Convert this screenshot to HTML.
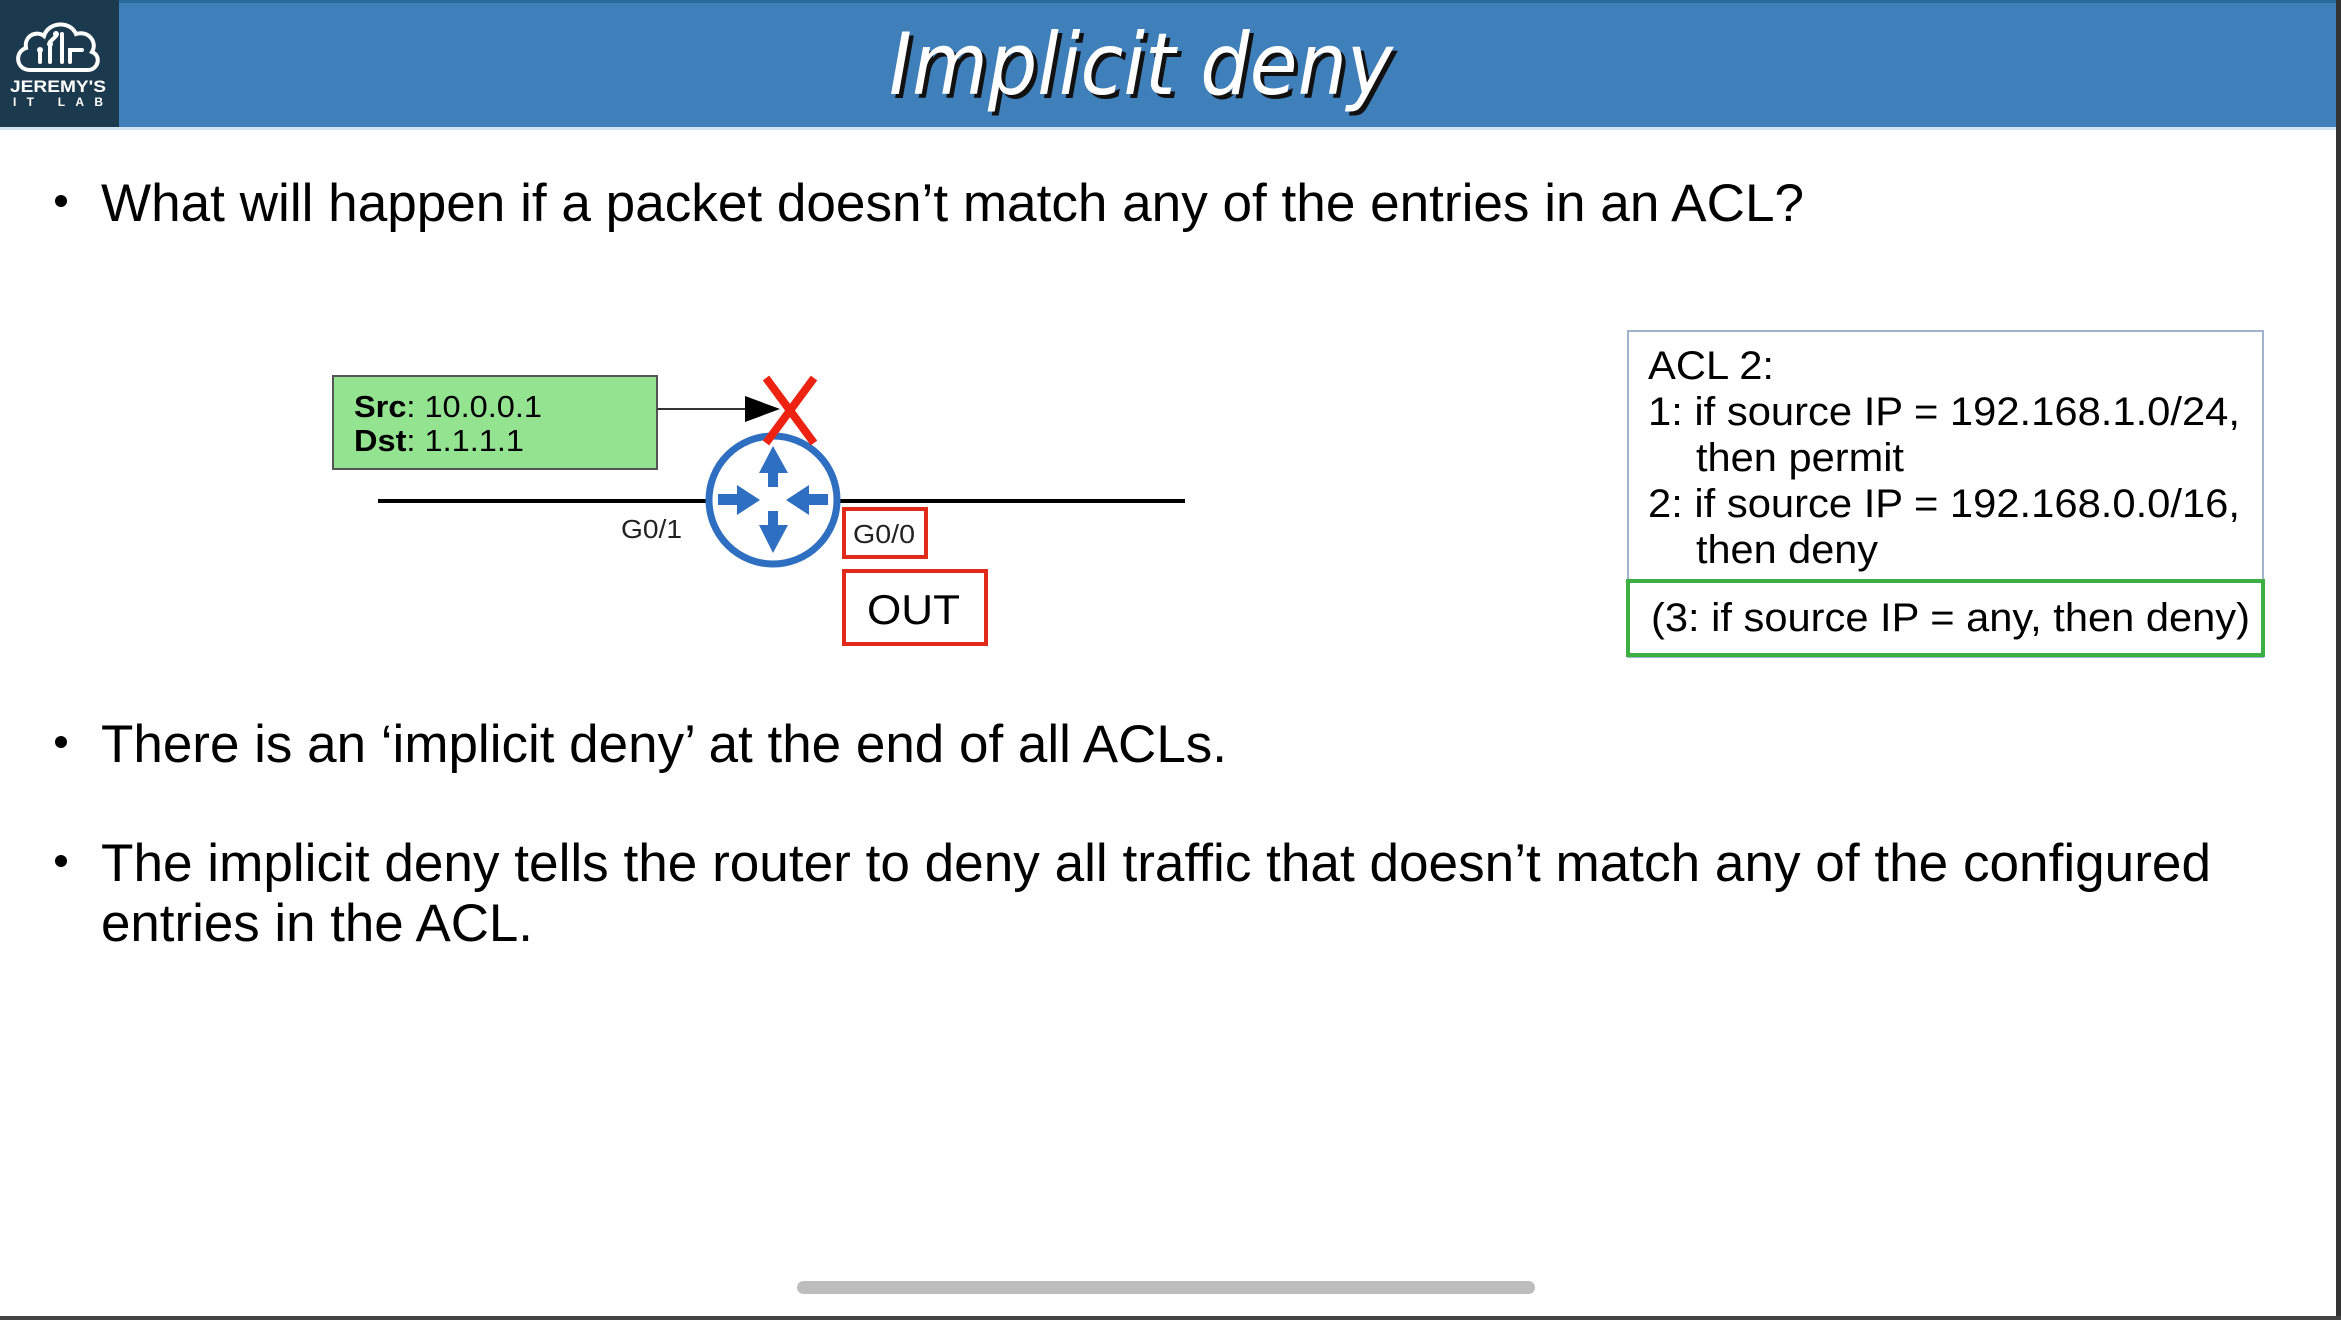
<!DOCTYPE html>
<html><head><meta charset="utf-8"><style>
html,body{margin:0;padding:0;background:#fff;}
svg{display:block;}
text{font-family:"Liberation Sans",sans-serif;}
text.ttl{font-family:"DejaVu Sans ExtraLight","DejaVu Sans",sans-serif;font-weight:200;font-style:italic;}
</style></head><body>
<svg width="2341" height="1320" viewBox="0 0 2341 1320" xmlns="http://www.w3.org/2000/svg">
<rect x="0" y="0" width="2341" height="1320" fill="#fff"/>
<rect x="0" y="0" width="2341" height="127" fill="#3f7fba"/>
<rect x="0" y="0" width="2341" height="3" fill="#2a6a9a"/>
<rect x="0" y="127" width="2341" height="3" fill="#cfe6f0"/>
<rect x="0" y="0" width="119" height="127" fill="#1c3a4e"/>
<g fill="none" stroke="#fff" stroke-width="4" stroke-linecap="round">
<path d="M30 70 C16 70 14 52 26 48 C24 36 36 30 44 36 C48 22 70 20 76 34 C88 30 98 42 92 52 C102 56 98 70 88 70 Z"/>
<path d="M40 62 L40 52 M50 62 L50 42 L56 36 M62 62 L62 34 M70 62 L70 50 L82 50"/>
</g>
<g fill="#fff"><circle cx="40" cy="50" r="3"/><circle cx="56" cy="34" r="3"/><circle cx="50" cy="44" r="3"/></g>
<text x="58" y="92" font-size="17" font-weight="bold" fill="#fff" text-anchor="middle" textLength="96" lengthAdjust="spacingAndGlyphs">JEREMY'S</text>
<text x="58" y="106" font-size="12" font-weight="bold" fill="#fff" text-anchor="middle" textLength="90" lengthAdjust="spacing">IT LAB</text>
<text class="ttl" x="893" y="98" font-size="86" fill="#111" textLength="504" lengthAdjust="spacingAndGlyphs">Implicit deny</text>
<text class="ttl" x="889" y="94" font-size="86" fill="#fff" textLength="504" lengthAdjust="spacingAndGlyphs">Implicit deny</text>
<rect x="2336" y="0" width="5" height="1320" fill="#333"/>
<rect x="0" y="1316" width="2341" height="4" fill="#444"/>
<g fill="#000" font-size="53">
<circle cx="61" cy="201" r="6"/>
<text x="101" y="221" textLength="1703" lengthAdjust="spacingAndGlyphs">What will happen if a packet doesn’t match any of the entries in an ACL?</text>
<circle cx="61" cy="742" r="6"/>
<text x="101" y="762" textLength="1126" lengthAdjust="spacingAndGlyphs">There is an ‘implicit deny’ at the end of all ACLs.</text>
<circle cx="61" cy="861" r="6"/>
<text x="101" y="881" textLength="2110" lengthAdjust="spacingAndGlyphs">The implicit deny tells the router to deny all traffic that doesn’t match any of the configured</text>
<text x="101" y="941" textLength="432" lengthAdjust="spacingAndGlyphs">entries in the ACL.</text>
</g>
<rect x="333" y="376" width="324" height="93" fill="#93e391" stroke="#555" stroke-width="2"/>
<text x="354" y="417" font-size="31" textLength="188" lengthAdjust="spacingAndGlyphs"><tspan font-weight="bold">Src</tspan>: 10.0.0.1</text>
<text x="354" y="451" font-size="31" textLength="170" lengthAdjust="spacingAndGlyphs"><tspan font-weight="bold">Dst</tspan>: 1.1.1.1</text>
<line x1="657" y1="409" x2="750" y2="409" stroke="#333" stroke-width="2"/>
<polygon points="745,396 780,409 745,422" fill="#000"/>
<line x1="378" y1="501" x2="1185" y2="501" stroke="#000" stroke-width="4"/>
<circle cx="773" cy="500" r="64" fill="#fff" stroke="#2f6fc1" stroke-width="7"/>
<g fill="#2f6fc1">
<polygon points="773,446 788,473 778,473 778,487 768,487 768,473 759,473"/>
<polygon points="773,553 788,525 778,525 778,511 768,511 768,525 759,525"/>
<polygon points="760,500 737,485 737,494 718,494 718,505 737,505 737,515"/>
<polygon points="786,500 809,485 809,494 828,494 828,505 809,505 809,515"/>
</g>
<g stroke="#ee2211" stroke-width="8"><line x1="766" y1="378" x2="814" y2="443"/><line x1="814" y1="378" x2="766" y2="443"/></g>
<text x="621" y="538" font-size="26" fill="#222" textLength="61" lengthAdjust="spacingAndGlyphs">G0/1</text>
<rect x="844" y="509" width="82" height="48" fill="none" stroke="#e02a1a" stroke-width="4"/>
<text x="853" y="543" font-size="26" fill="#222" textLength="62" lengthAdjust="spacingAndGlyphs">G0/0</text>
<rect x="844" y="571" width="142" height="73" fill="none" stroke="#e02a1a" stroke-width="4"/>
<text x="867" y="624" font-size="42" fill="#000" textLength="93" lengthAdjust="spacingAndGlyphs">OUT</text>
<rect x="1628" y="331" width="635" height="326" fill="#fff" stroke="#9fb4cc" stroke-width="2"/>
<g font-size="40" fill="#000">
<text x="1648" y="379" textLength="126" lengthAdjust="spacingAndGlyphs">ACL 2:</text>
<text x="1648" y="425" textLength="592" lengthAdjust="spacingAndGlyphs">1: if source IP = 192.168.1.0/24,</text>
<text x="1696" y="471" textLength="208" lengthAdjust="spacingAndGlyphs">then permit</text>
<text x="1648" y="517" textLength="592" lengthAdjust="spacingAndGlyphs">2: if source IP = 192.168.0.0/16,</text>
<text x="1696" y="563" textLength="182" lengthAdjust="spacingAndGlyphs">then deny</text>
</g>
<rect x="1628" y="581" width="635" height="74" fill="#fff" stroke="#3cb043" stroke-width="4"/>
<text x="1651" y="631" font-size="40" textLength="599" lengthAdjust="spacingAndGlyphs">(3: if source IP = any, then deny)</text>
<rect x="797" y="1281" width="738" height="13" rx="6.5" fill="#bdbdbd"/>
</svg>
</body></html>
